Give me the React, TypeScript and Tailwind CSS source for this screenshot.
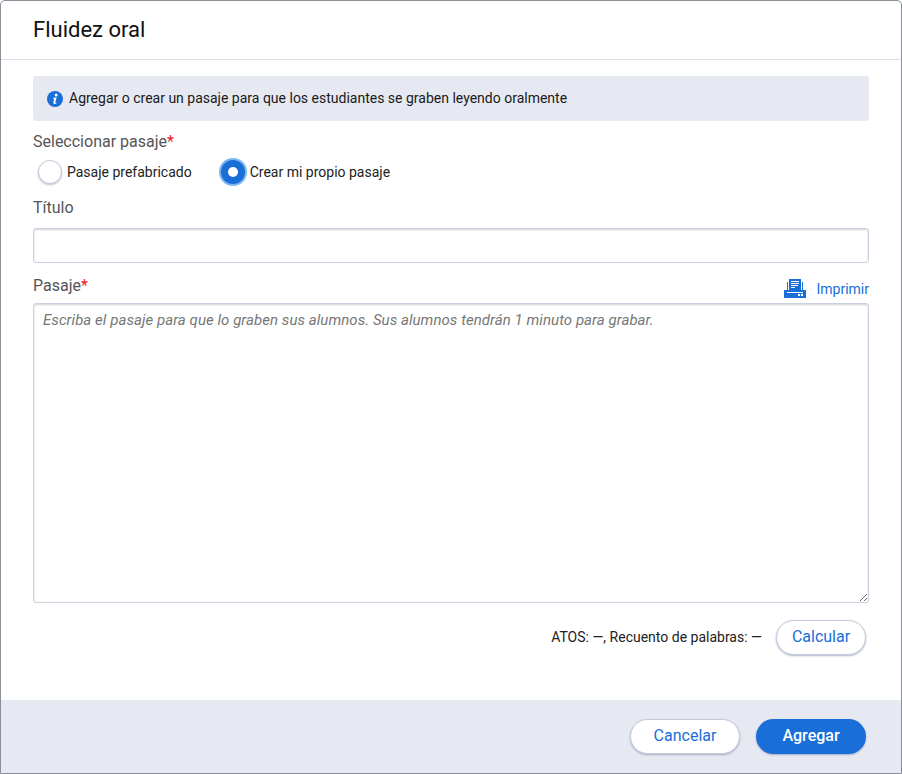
import React from 'react';

const PrinterIcon = () => (
  <svg width="22" height="19" viewBox="0 0 22 19" className="block">
    <rect x="0" y="11" width="22" height="8" fill="#1a6ed8" />
    <rect x="3" y="3" width="1" height="8" fill="#1a6ed8" />
    <rect x="18" y="3" width="1" height="8" fill="#1a6ed8" />
    <rect x="5" y="0" width="12" height="12" fill="#1a6ed8" />
    <rect x="7" y="2" width="8" height="1" fill="#fff" />
    <rect x="7" y="4" width="8" height="1" fill="#fff" />
    <rect x="7" y="6" width="7" height="1" fill="#fff" />
    <rect x="7" y="8" width="4" height="1" fill="#fff" />
    <rect x="3" y="13" width="16" height="1" fill="#fff" />
    <rect x="14" y="15" width="2" height="2" fill="#fff" />
    <rect x="17" y="15" width="2" height="2" fill="#fff" />
  </svg>
);

const InfoIcon = () => (
  <svg width="16" height="16" viewBox="0 0 16 16" className="block shrink-0">
    <circle cx="8" cy="8" r="8" fill="#1a6ed8" />
    <circle cx="9.2" cy="3.9" r="1.5" fill="#fff" />
    <path d="M6.2 6.7 L9.6 6.4 L8.3 11.3 Q8.2 12 9.5 11.5 L9.4 12.3 Q7.8 13.2 6.8 12.7 Q6.1 12.3 6.4 11.3 L7.2 7.9 L6.1 7.7 Z" fill="#fff" />
  </svg>
);

export default function App() {
  return (
    <div className="w-[902px] h-[774px] bg-white border border-[#8b8f98] rounded-t-[5px] flex flex-col overflow-hidden font-['Roboto',sans-serif]">
      <div className="h-[59px] shrink-0 border-b border-[#dcdfe6] pl-[32px] flex items-center">
        <h1 className="text-[22px] leading-none text-[#111] pb-[1px]">Fluidez oral</h1>
      </div>

      <div className="flex-1 px-[32px] pt-[16px]">
        <div className="h-[45px] bg-[#e6e9f1] rounded-[3px] flex items-center pl-[14px] gap-[6px]">
          <InfoIcon />
          <span className="text-[14px] text-[#1a1a1a]">Agregar o crear un pasaje para que los estudiantes se graben leyendo oralmente</span>
        </div>

        <div className="mt-[12px] text-[16px] leading-[18px] text-[#555]">
          Seleccionar pasaje<span className="text-[#f5141c]">*</span>
        </div>

        <div className="mt-[8px] flex items-center h-[26px]">
          <span className="ml-[5px] w-[24px] h-[24px] rounded-full border border-[#c5cadb] bg-white shadow-[0_1px_2px_rgba(120,130,170,0.5)]" />
          <span className="ml-[5px] text-[14px] text-[#222]">Pasaje prefabricado</span>
          <span className="ml-[29px] w-[24px] h-[24px] rounded-full bg-[#1a6ed8] ring-[2px] ring-[#7db5f2] flex items-center justify-center">
            <span className="w-[10px] h-[10px] rounded-full bg-white" />
          </span>
          <span className="ml-[5px] text-[14px] text-[#222]">Crear mi propio pasaje</span>
        </div>

        <div className="mt-[14px] text-[16px] leading-[18px] text-[#555]">Título</div>

        <input className="mt-[11px] block w-full h-[35px] rounded-[3px] border border-[#cdd0de] shadow-[inset_0_1px_2px_rgba(120,125,150,0.35)] outline-none" />

        <div className="mt-[14px] h-[26px] flex justify-between items-start">
          <div className="text-[16px] leading-[18px] text-[#555]">
            Pasaje<span className="text-[#f5141c]">*</span>
          </div>
          <div className="flex items-center gap-[10px]">
            <PrinterIcon />
            <span className="pt-[2px] text-[14px] text-[#1a6ed8]">Imprimir</span>
          </div>
        </div>

        <textarea
          className="block w-full h-[300px] rounded-[3px] border border-[#cdd0de] shadow-[inset_0_1px_2px_rgba(120,125,150,0.35)] outline-none px-[9px] py-[5px] text-[15px] italic tracking-[0.055px] placeholder:text-[#777]"
          placeholder="Escriba el pasaje para que lo graben sus alumnos. Sus alumnos tendrán 1 minuto para grabar."
        />

        <div className="mt-[17px] flex justify-end items-center pr-[3px]">
          <span className="text-[14px] text-[#222]">ATOS: —, Recuento de palabras: —</span>
          <button className="ml-[14px] w-[90px] h-[35px] rounded-full bg-white border border-[#c5cadb] shadow-[0_1px_2px_rgba(120,130,170,0.6)] pb-[1px] text-[16px] text-[#1a6ed8]">Calcular</button>
        </div>
      </div>

      <div className="h-[73px] shrink-0 bg-[#e6e9f1] flex items-center justify-end gap-[16px] pr-[35px]">
        <button className="w-[110px] h-[35px] rounded-full bg-white border border-[#c5cadb] shadow-[0_1px_2px_rgba(120,130,170,0.6)] pb-[1px] text-[16px] text-[#1a6ed8]">Cancelar</button>
        <button className="w-[110px] h-[35px] rounded-full bg-[#1a6ed8] shadow-[0_1px_2px_rgba(120,130,170,0.6)] pb-[1px] text-[16px] font-medium text-white">Agregar</button>
      </div>
    </div>
  );
}
